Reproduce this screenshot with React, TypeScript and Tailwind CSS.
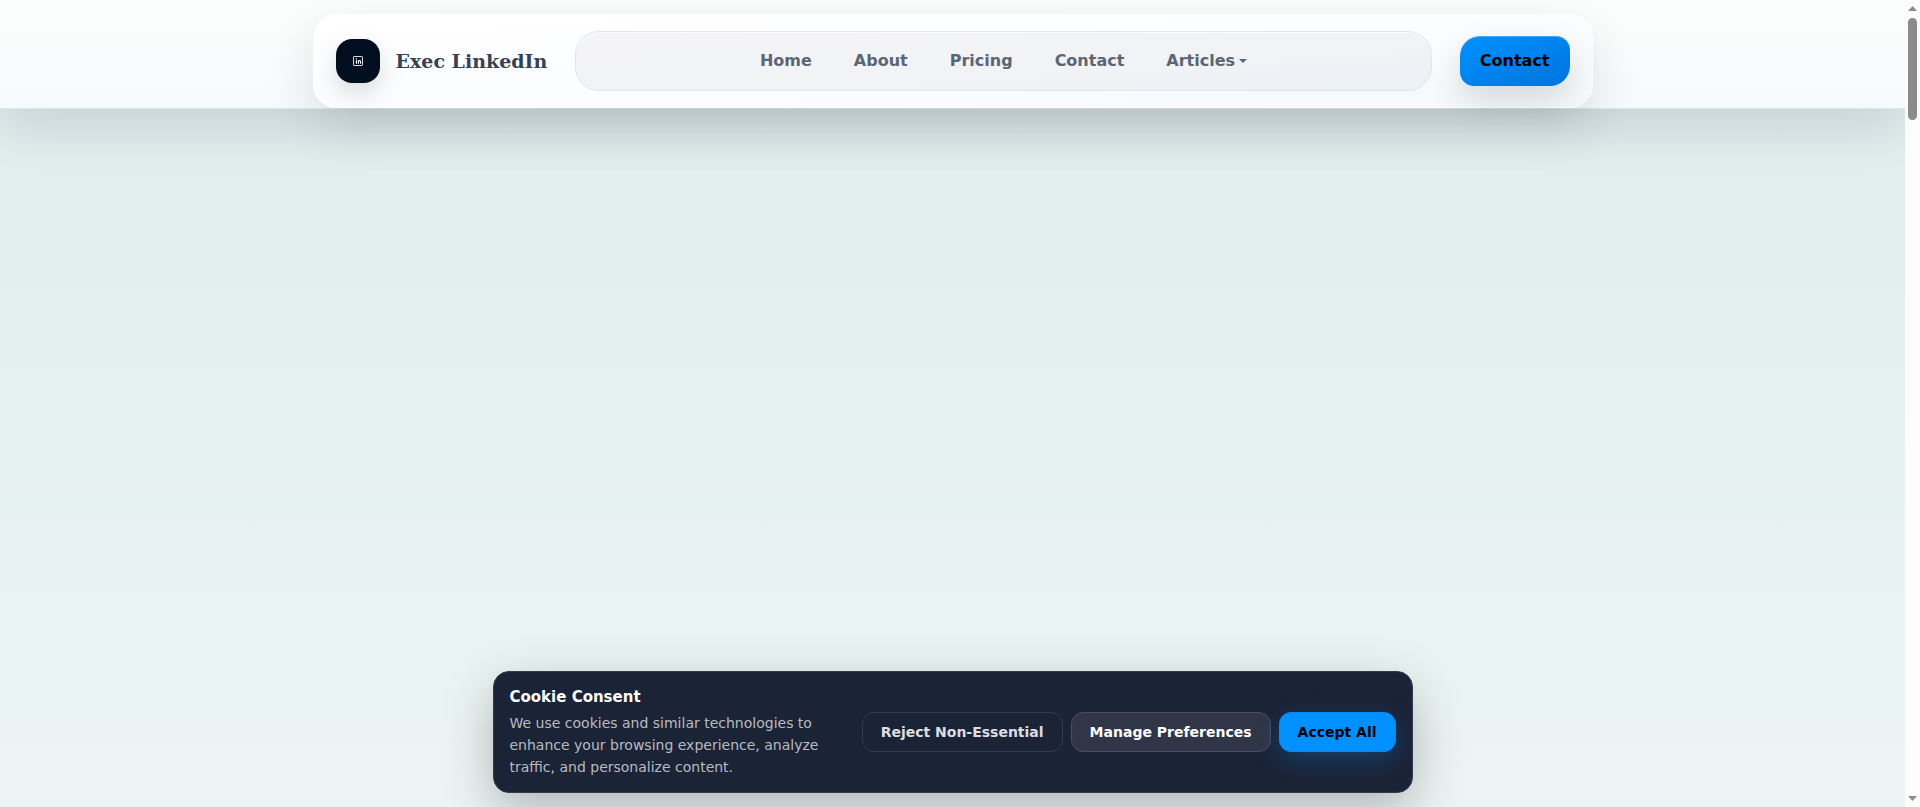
const navLinks = [
  { label: 'Home', href: '#home' },
  { label: 'About', href: '#about' },
  { label: 'Pricing', href: '#pricing' },
  { label: 'Contact', href: '#contact' },
];

function LogoMark() {
  return (
    <span className="flex size-11 items-center justify-center rounded-2xl bg-linear-to-br from-[#020d20] to-[#01101d] shadow-[0_10px_26px_rgba(2,6,23,0.14)]">
      <svg width="12" height="12" viewBox="0 0 12 12" fill="none" aria-hidden="true">
        <rect x="1.5" y="1.5" width="9" height="9" rx="0.6" stroke="#d5d9df" />
        <path d="M4.4 5.2v3.6M6.4 8.8V5.2M6.4 6.8c0-1.5 2.2-1.5 2.2 0v2" stroke="#ffffff" strokeWidth="1.2" />
        <circle cx="4.4" cy="3.9" r="0.7" fill="#ffffff" />
      </svg>
    </span>
  );
}

function Header() {
  return (
    <header className="border-b border-[#dfe7e7] bg-linear-to-b from-[#fcfefc] to-[#f7fafc] pt-3.5 shadow-[0_18px_50px_rgba(2,6,23,0.11)]">
      <div className="mx-auto flex max-w-7xl items-center gap-7 rounded-3xl border border-white/80 bg-linear-to-br from-white via-[#fcfdff] to-[#f5f9fb] px-[22px] py-4 shadow-[0_18px_50px_rgba(2,6,23,0.11)]">
        <a href="#home" className="flex items-center gap-4">
          <LogoMark />
          <span className="font-['DejaVu_Serif',serif] text-[19px] leading-7 font-bold text-[#364153]">Exec LinkedIn</span>
        </a>

        <nav className="flex flex-1 items-center justify-center gap-[42px] rounded-3xl border border-[#e2e5e8] bg-linear-to-br from-[#f5f5f7] via-[#f2f3f5] to-[#ecf1f5] py-[17px] font-bold text-[#5c6575] shadow-[inset_0_1px_0_rgba(255,255,255,0.7)]">
          {navLinks.map((link) => (
            <a key={link.label} href={link.href} className="hover:text-[#364153]">
              {link.label}
            </a>
          ))}
          <button type="button" className="flex items-center gap-1 font-bold hover:text-[#364153]">
            Articles
            <svg width="8" height="4" viewBox="0 0 8 4" fill="currentColor" aria-hidden="true">
              <path d="M0 0h8L4 4z" />
            </svg>
          </button>
        </nav>

        <a
          href="#contact"
          className="rounded-tl-[20px] rounded-tr-[14px] rounded-br-[20px] rounded-bl-[14px] bg-linear-to-br from-[#0092ff] to-[#0074dd] px-5 py-[13px] font-bold text-black shadow-[0_14px_34px_rgba(2,6,23,0.14),inset_0_1px_0_rgba(255,255,255,0.25)]"
        >
          Contact
        </a>
      </div>
    </header>
  );
}

function CookieBanner() {
  return (
    <section
      aria-label="Cookie Consent"
      className="mx-auto mb-3.5 flex w-full max-w-[920px] items-center gap-8 rounded-2xl border border-[#313a4b] bg-[#1b2336] px-4 py-3.5 text-sm shadow-[0_18px_50px_rgba(0,0,0,0.25)]"
    >
      <div className="flex-1">
        <h2 className="text-[15px] leading-[22px] font-bold text-white">Cookie Consent</h2>
        <p className="mt-1 leading-[22px] text-[#b9bbc1]">
          We use cookies and similar technologies to enhance your browsing experience, analyze traffic, and personalize
          content.
        </p>
      </div>
      <div className="flex gap-2 font-bold">
        <button type="button" className="h-10 rounded-xl border border-[#343c4d] px-[18px] text-[#dddee1]">
          Reject Non-Essential
        </button>
        <button type="button" className="h-10 rounded-xl border border-[#484f5e] bg-[#303547] px-[18px] text-white">
          Manage Preferences
        </button>
        <button
          type="button"
          className="h-10 rounded-xl border border-[#0a8af0] bg-[#0090ff] px-[18px] text-black shadow-[0_8px_24px_rgba(0,144,255,0.25)]"
        >
          Accept All
        </button>
      </div>
    </section>
  );
}

function ScrollTrack() {
  return (
    <div aria-hidden="true" className="flex w-[15px] flex-col items-center bg-[#fcfcfc] py-1.5">
      <svg width="9" height="5" viewBox="0 0 9 5" fill="#8b8b8b">
        <path d="M4.5 0L9 5H0z" />
      </svg>
      <div className="mt-[7px] h-[102px] w-[9px] rounded-full bg-[#8b8b8b]" />
      <svg className="mt-auto" width="9" height="5" viewBox="0 0 9 5" fill="#8b8b8b">
        <path d="M0 0h9L4.5 5z" />
      </svg>
    </div>
  );
}

export default function App() {
  return (
    <div className="flex h-screen overflow-hidden font-['DejaVu_Sans',sans-serif]">
      <main className="flex flex-1 flex-col justify-between overflow-hidden bg-linear-to-b from-[#ddecec] to-[#ecf5f4]">
        <Header />
        <CookieBanner />
      </main>
      <ScrollTrack />
    </div>
  );
}
